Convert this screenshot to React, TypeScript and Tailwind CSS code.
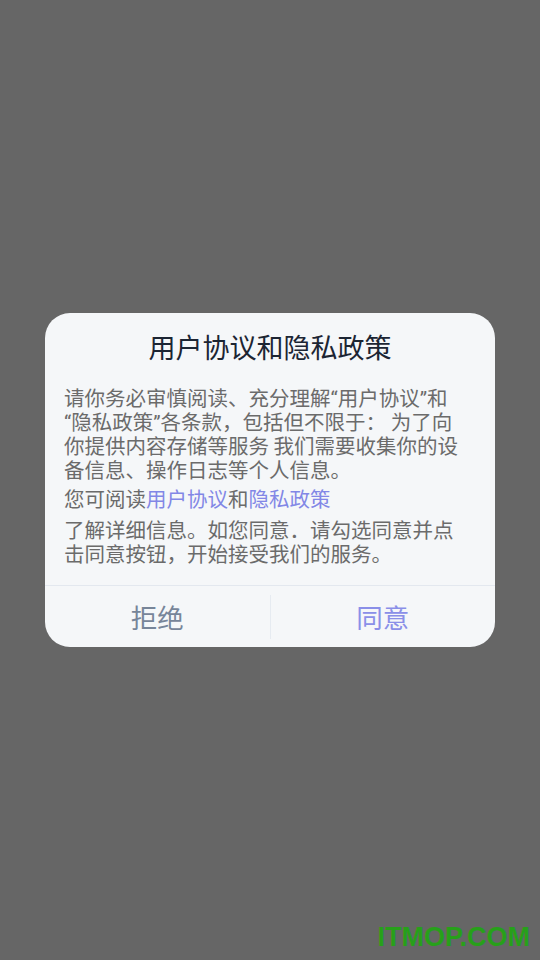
import React from 'react';

const FONT = { fontFamily: '"Noto Sans CJK SC", "Noto Sans", sans-serif' };

// narrow latin quotes, as the device font draws them
const Q: React.FC<{ c: string }> = ({ c }) => (
  <span className="leading-none" style={{ fontFamily: 'Roboto, "Noto Sans", sans-serif' }}>
    {c}
  </span>
);

const Line: React.FC<{ children: React.ReactNode; className?: string }> = ({ children, className = '' }) => (
  <div className={`h-[24px] whitespace-pre ${className}`}>{children}</div>
);

const PrivacyDialog: React.FC = () => (
  <div className="w-[450px] overflow-hidden rounded-[25px] bg-[#f5f7f9]">
    <div className="pt-[17px] text-center text-[27px] leading-[34px] text-[#1c2533]">用户协议和隐私政策</div>

    <div className="px-[19px] pt-[21px] pb-[20px] text-[20.5px] leading-[24px] text-[#6b6b6b]">
      <Line>
        请你务必审慎阅读、充分理解<Q c="“" />用户协议<Q c="”" />和
      </Line>
      <Line>
        <Q c="“" />隐私政策<Q c="”" />各条款，包括但不限于： 为了向
      </Line>
      <Line>你提供内容存储等服务 我们需要收集你的设</Line>
      <Line>备信息、操作日志等个人信息。</Line>
      <Line className="mt-[5px]">
        您可阅读<span className="text-[#8287e6]">用户协议</span>和<span className="text-[#8287e6]">隐私政策</span>
      </Line>
      <Line className="mt-[7px]">了解详细信息。如您同意．请勾选同意并点</Line>
      <Line>击同意按钮，开始接受我们的服务。</Line>
    </div>

    <div className="flex h-[62px] items-center border-t border-[#e3e8ef]">
      <button className="flex h-full flex-1 items-center justify-center text-[26.5px] text-[#778599]">拒绝</button>
      <div className="h-[44px] w-px bg-[#e6ebf1]" />
      <button className="flex h-full flex-1 items-center justify-center text-[26.5px] text-[#8a8fe8]">同意</button>
    </div>
  </div>
);

export default function App() {
  return (
    <div className="relative flex h-[960px] w-[540px] flex-col items-center bg-[#666666]" style={FONT}>
      <div className="pt-[313px]">
        <PrivacyDialog />
      </div>
      {/* site watermark */}
      <div
        className="absolute right-[10px] bottom-[9px] text-[27px] font-bold leading-none text-[#27a01a]"
        style={{ fontFamily: '"Liberation Sans", Arial, sans-serif' }}
      >
        ITMOP.COM
      </div>
    </div>
  );
}
